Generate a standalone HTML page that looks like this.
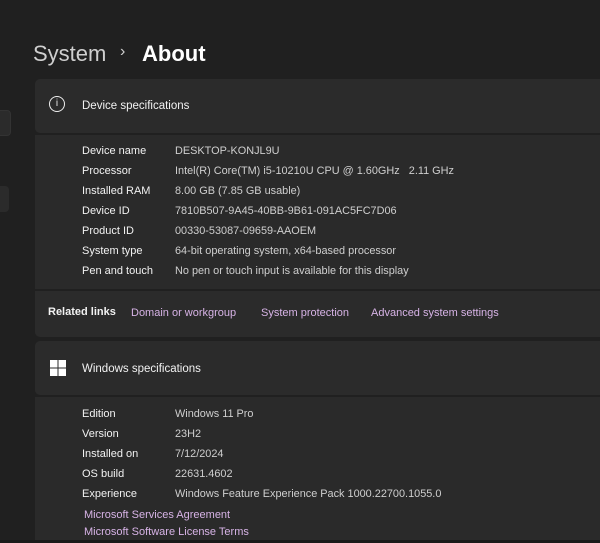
<!DOCTYPE html><html><head><style>
body{margin:0;width:600px;height:543px;background:#202020;font-family:"Liberation Sans",sans-serif;overflow:hidden;position:relative;color:#fff}
.a{position:absolute}
.card{position:absolute;left:35px;width:570px;background:#2b2b2b;border-radius:5px 0 0 5px}
.lbl{position:absolute;left:82px;font-size:11px;color:#f2f2f2}
.val{position:absolute;left:175px;font-size:10.9px;color:#cfcfcf}
.lnk{position:absolute;font-size:11px;color:#d7b3e6}
</style></head><body>
<div class="a" style="left:33px;top:41px;font-size:22px;color:#cfcfcf">System</div>
<div class="a" style="left:120px;top:43px;font-size:16px;color:#cfcfcf">›</div>
<div class="a" style="left:142px;top:41px;font-size:22px;font-weight:bold;color:#fff">About</div>
<div class="a" style="left:-6px;top:110px;width:15px;height:24px;background:#2b2b2b;border-radius:4px;border:1px solid #333"></div>
<div class="a" style="left:-6px;top:186px;width:15px;height:26px;background:#2b2b2b;border-radius:4px"></div>
<div class="card" style="top:79px;height:54px"></div>
<div class="card" style="top:135px;height:154px;border-radius:0;background:#2a2a2a"></div>
<div class="card" style="top:291px;height:46px;border-radius:0 0 0 5px"></div>
<div class="card" style="top:341px;height:54px"></div>
<div class="card" style="top:397px;height:143px;border-radius:0;background:#2a2a2a"></div>
<div class="a" style="left:0;top:540px;width:600px;height:3px;background:#1a1a1a"></div>
<div class="a" style="left:49px;top:96px;width:14px;height:14px;border:1.4px solid #eee;border-radius:50%;font-size:10px;text-align:center;line-height:14px;color:#eee">i</div>
<div class="a" style="left:82px;top:100px;font-size:11.5px;color:#f2f2f2">Device specifications</div>
<div class="lbl" style="top:145px">Device name</div><div class="val" style="top:145px">DESKTOP-KONJL9U</div>
<div class="lbl" style="top:165px">Processor</div><div class="val" style="top:165px">Intel(R) Core(TM) i5-10210U CPU @ 1.60GHz &nbsp; 2.11 GHz</div>
<div class="lbl" style="top:185px">Installed RAM</div><div class="val" style="top:185px">8.00 GB (7.85 GB usable)</div>
<div class="lbl" style="top:205px">Device ID</div><div class="val" style="top:205px">7810B507-9A45-40BB-9B61-091AC5FC7D06</div>
<div class="lbl" style="top:225px">Product ID</div><div class="val" style="top:225px">00330-53087-09659-AAOEM</div>
<div class="lbl" style="top:245px">System type</div><div class="val" style="top:245px">64-bit operating system, x64-based processor</div>
<div class="lbl" style="top:265px">Pen and touch</div><div class="val" style="top:265px">No pen or touch input is available for this display</div>
<div class="a" style="left:48px;top:306px;font-size:11px;font-weight:bold;color:#f2f2f2">Related links</div>
<div class="lnk" style="left:131px;top:307px">Domain or workgroup</div>
<div class="lnk" style="left:261px;top:307px">System protection</div>
<div class="lnk" style="left:371px;top:307px">Advanced system settings</div>
<svg class="a" style="left:50px;top:360px" width="16" height="16"><rect x="0" y="0" width="7.5" height="7.5" fill="#fff"/><rect x="8.5" y="0" width="7.5" height="7.5" fill="#fff"/><rect x="0" y="8.5" width="7.5" height="7.5" fill="#fff"/><rect x="8.5" y="8.5" width="7.5" height="7.5" fill="#fff"/></svg>
<div class="a" style="left:82px;top:363px;font-size:11.5px;color:#f2f2f2">Windows specifications</div>
<div class="lbl" style="top:408px">Edition</div><div class="val" style="top:408px">Windows 11 Pro</div>
<div class="lbl" style="top:428px">Version</div><div class="val" style="top:428px">23H2</div>
<div class="lbl" style="top:448px">Installed on</div><div class="val" style="top:448px">7/12/2024</div>
<div class="lbl" style="top:468px">OS build</div><div class="val" style="top:468px">22631.4602</div>
<div class="lbl" style="top:488px">Experience</div><div class="val" style="top:488px">Windows Feature Experience Pack 1000.22700.1055.0</div>
<div class="lnk" style="left:84px;top:509px">Microsoft Services Agreement</div>
<div class="lnk" style="left:84px;top:526px">Microsoft Software License Terms</div>
</body></html>
